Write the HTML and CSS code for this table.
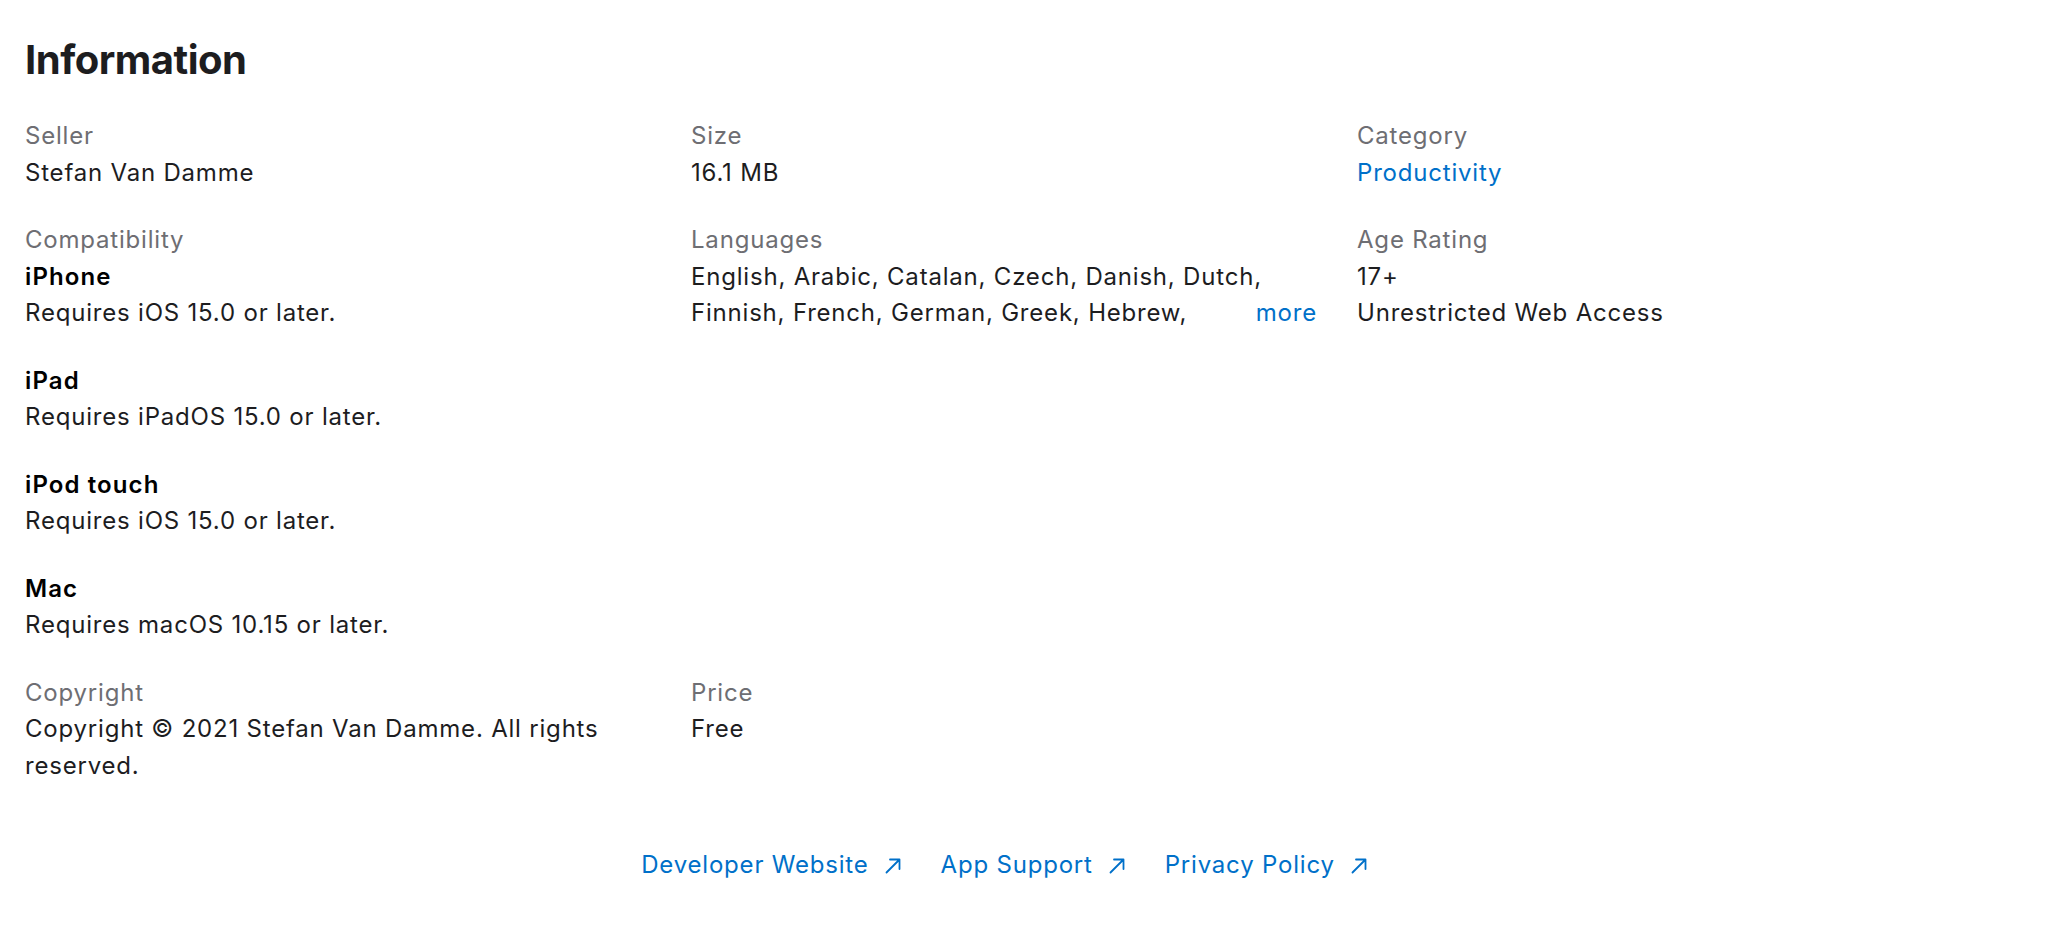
FILE: index.html
```html
<!DOCTYPE html>
<html lang="en">
<head>
<meta charset="utf-8">
<title>Information</title>
<link rel="stylesheet" href="styles.css">
</head>
<body>
<section class="info">
  <h2 class="info__title">Information</h2>
  <dl class="info__grid">
    <div class="item">
      <dt class="item__label">Seller</dt>
      <dd class="item__value">Stefan Van Damme</dd>
    </div>
    <div class="item">
      <dt class="item__label">Size</dt>
      <dd class="item__value">16.1 MB</dd>
    </div>
    <div class="item">
      <dt class="item__label">Category</dt>
      <dd class="item__value"><a class="link" href="#">Productivity</a></dd>
    </div>
    <div class="item">
      <dt class="item__label">Compatibility</dt>
      <dd class="item__value">
        <dl class="compat">
          <div class="compat__row">
            <dt class="compat__device">iPhone</dt>
            <dd class="compat__req">Requires iOS 15.0 or later.</dd>
          </div>
          <div class="compat__row">
            <dt class="compat__device">iPad</dt>
            <dd class="compat__req">Requires iPadOS 15.0 or later.</dd>
          </div>
          <div class="compat__row">
            <dt class="compat__device">iPod touch</dt>
            <dd class="compat__req">Requires iOS 15.0 or later.</dd>
          </div>
          <div class="compat__row">
            <dt class="compat__device">Mac</dt>
            <dd class="compat__req">Requires macOS 10.15 or later.</dd>
          </div>
        </dl>
      </dd>
    </div>
    <div class="item">
      <dt class="item__label">Languages</dt>
      <dd class="item__value clamp">
        <p class="clamp__text">English, Arabic, Catalan, Czech, Danish, Dutch, Finnish, French, German, Greek, Hebrew,<span class="clamp__rest"> Hindi, Hungarian, Indonesian, Italian, Japanese, Korean, Malay, Norwegian Bokmål, Polish, Portuguese, Romanian, Russian, Simplified Chinese, Slovak, Spanish, Swedish, Thai, Traditional Chinese, Turkish, Ukrainian, Vietnamese</span></p>
        <button class="clamp__more" type="button">more</button>
      </dd>
    </div>
    <div class="item">
      <dt class="item__label">Age Rating</dt>
      <dd class="item__value">17+<br>Unrestricted Web Access</dd>
    </div>
    <div class="item">
      <dt class="item__label">Copyright</dt>
      <dd class="item__value">Copyright © 2021 Stefan Van Damme. All rights reserved.</dd>
    </div>
    <div class="item">
      <dt class="item__label">Price</dt>
      <dd class="item__value">Free</dd>
    </div>
  </dl>
  <ul class="links">
    <li><a class="link links__item" href="#">Developer Website<svg class="arrow" viewBox="0 0 16 16" aria-hidden="true"><path d="M1.5 14.5 L14.5 1.5 M5 1.5 H14.5 V11"/></svg></a></li>
    <li><a class="link links__item" href="#">App Support<svg class="arrow" viewBox="0 0 16 16" aria-hidden="true"><path d="M1.5 14.5 L14.5 1.5 M5 1.5 H14.5 V11"/></svg></a></li>
    <li><a class="link links__item" href="#">Privacy Policy<svg class="arrow" viewBox="0 0 16 16" aria-hidden="true"><path d="M1.5 14.5 L14.5 1.5 M5 1.5 H14.5 V11"/></svg></a></li>
  </ul>
</section>
</body>
</html>
```

FILE: styles.css
```css
html, body {
  margin: 0;
  padding: 0;
  background: #ffffff;
}

body {
  font-family: Inter, "Noto Sans", "Liberation Sans", sans-serif;
  color: #1d1d1f;
  font-size: 24px;
  line-height: 36.5px;
  letter-spacing: 0.8px;
}

.info {
  width: 1958px;
  padding: 0 25px;
}

.info__title {
  margin: 36px 0 34px;
  font-size: 40px;
  line-height: 48px;
  font-weight: 700;
  letter-spacing: -0.5px;
  color: #1d1d1f;
}

.info__grid {
  margin: 0;
  display: grid;
  grid-template-columns: repeat(3, 626px);
  column-gap: 40px;
  row-gap: 31px;
  align-items: start;
}

.item__label {
  color: #6e6e73;
}

.item__value {
  margin: 0;
  color: #1d1d1f;
}

.link {
  color: #0070c9;
  text-decoration: none;
}

.compat {
  margin: 0;
  display: flex;
  flex-direction: column;
  gap: 31px;
}

.compat__device {
  font-weight: 600;
  letter-spacing: 1.1px;
  color: #000000;
}

.compat__req {
  margin: 0;
}

.clamp {
  position: relative;
}

.clamp__text {
  margin: 0;
}

.clamp__rest {
  display: none;
}

.clamp__more {
  position: absolute;
  right: 0;
  bottom: 0;
  border: 0;
  margin: 0;
  padding: 0;
  font: inherit;
  letter-spacing: inherit;
  line-height: 36.5px;
  color: #0070c9;
  background: #ffffff;
  cursor: pointer;
}

.links {
  list-style: none;
  margin: 63px 0 0;
  padding: 0;
  display: flex;
  justify-content: center;
  gap: 40px;
}

.links__item {
  display: inline-flex;
  align-items: center;
}

.arrow {
  width: 16px;
  height: 16px;
  margin-left: 16px;
  fill: none;
  stroke: currentColor;
  stroke-width: 1.8;
  stroke-linecap: round;
  stroke-linejoin: round;
  position: relative;
  top: 1px;
}
```
